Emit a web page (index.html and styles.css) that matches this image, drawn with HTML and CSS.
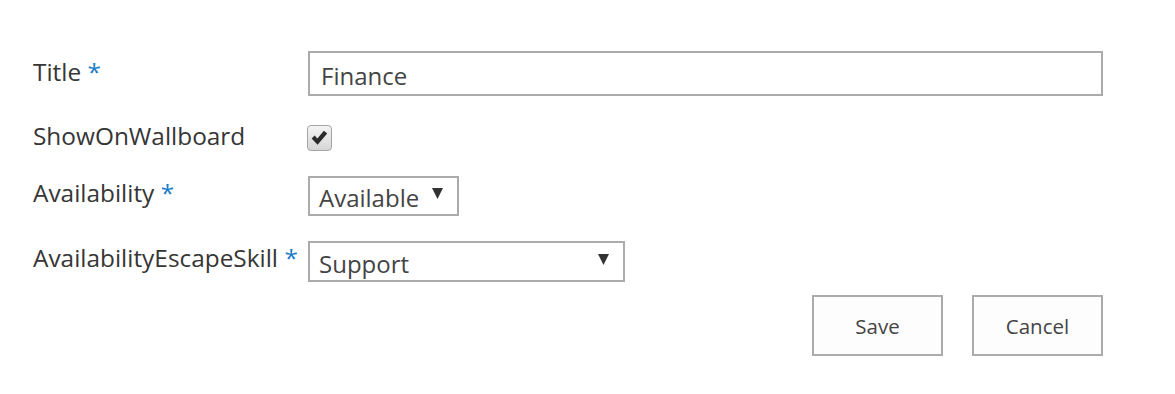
FILE: index.html
```html
<!DOCTYPE html>
<html lang="en">
  <head>
    <meta charset="UTF-8" />
    <meta name="viewport" content="width=device-width, initial-scale=1.0" />
    <title>Edit item</title>
    <link rel="stylesheet" href="styles.css">
  </head>
  <body>
    <form class="form">
      <!-- Title -->
      <div class="row row-title">
        <label class="label" for="title">Title <span class="req">*</span></label>
        <input class="text-input" type="text" id="title" value="Finance" />
      </div>

      <!-- ShowOnWallboard -->
      <div class="row row-check">
        <label class="label">ShowOnWallboard</label>
        <span class="checkbox">
          <svg width="17" height="16" viewBox="0 0 17 16">
            <path d="M0.6 8.6 L3.6 5.6 L6.4 8.4 L12.9 0.8 L16.2 3.6 L6.6 14.8 Z" fill="#2b2b2b" />
          </svg>
        </span>
      </div>

      <!-- Availability -->
      <div class="row row-avail">
        <label class="label">Availability <span class="req">*</span></label>
        <div class="select select-short">
          <span>Available</span>
          <svg class="arrow" width="11" height="11" viewBox="0 0 11 11"><path d="M0 0 H11 L5.5 11 Z" fill="#333" /></svg>
        </div>
      </div>

      <!-- AvailabilityEscapeSkill -->
      <div class="row row-skill">
        <label class="label">AvailabilityEscapeSkill <span class="req">*</span></label>
        <div class="select select-long">
          <span>Support</span>
          <svg class="arrow" width="11" height="11" viewBox="0 0 11 11"><path d="M0 0 H11 L5.5 11 Z" fill="#333" /></svg>
        </div>
      </div>

      <div class="actions">
        <button type="button" class="btn">Save</button>
        <button type="button" class="btn">Cancel</button>
      </div>
    </form>
  </body>
</html>
```

FILE: styles.css
```css
body {
  margin: 0;
  background-color: #fff;
  font-family: "Open Sans", "Liberation Sans", sans-serif;
  color: #333;
}
.form {
  width: 1070px;
  padding: 51px 0 0 33px;
}
.row {
  display: flex;
  align-items: flex-start;
}
.label {
  width: 275px;
  flex: none;
  font-size: 24.4px;
  line-height: 32px;
  color: #363636;
}
.req {
  color: #1a7cc9;
}
.row-title .label {
  padding-top: 5px;
}
.row-check {
  margin-top: 24px;
}
.row-avail {
  margin-top: 24px;
}
.row-avail .label,
.row-skill .label {
  padding-top: 1px;
}
.row-skill {
  margin-top: 25px;
}
.text-input {
  box-sizing: border-box;
  width: 795px;
  height: 45px;
  margin: 0;
  padding: 4px 11px 0;
  border: 2px solid #ababab;
  outline: none;
  font-family: inherit;
  font-size: 24px;
  color: #444;
}
.checkbox {
  box-sizing: border-box;
  width: 25px;
  height: 26px;
  margin-top: 5px;
  margin-left: -1px;
  border: 1px solid #a4a4a4;
  border-radius: 4px;
  background: linear-gradient(#f4f4f4, #d6d6d6);
  display: flex;
  align-items: center;
  justify-content: center;
}
.select {
  box-sizing: border-box;
  display: flex;
  align-items: center;
  justify-content: space-between;
  padding: 3px 14px 0 9px;
  border: 2px solid #ababab;
  font-size: 24px;
  color: #444;
}
.select-short {
  width: 151px;
  height: 40px;
}
.select-long {
  width: 317px;
  height: 41px;
}
.arrow {
  margin-top: -8px;
}
.actions {
  display: flex;
  justify-content: flex-end;
  gap: 29px;
  width: 1070px;
  margin-top: 13px;
}
.btn {
  box-sizing: border-box;
  width: 131px;
  height: 61px;
  background-color: #fdfdfd;
  border: 2px solid #ababab;
  font-family: inherit;
  font-size: 20.5px;
  color: #444;
  cursor: pointer;
}
```
